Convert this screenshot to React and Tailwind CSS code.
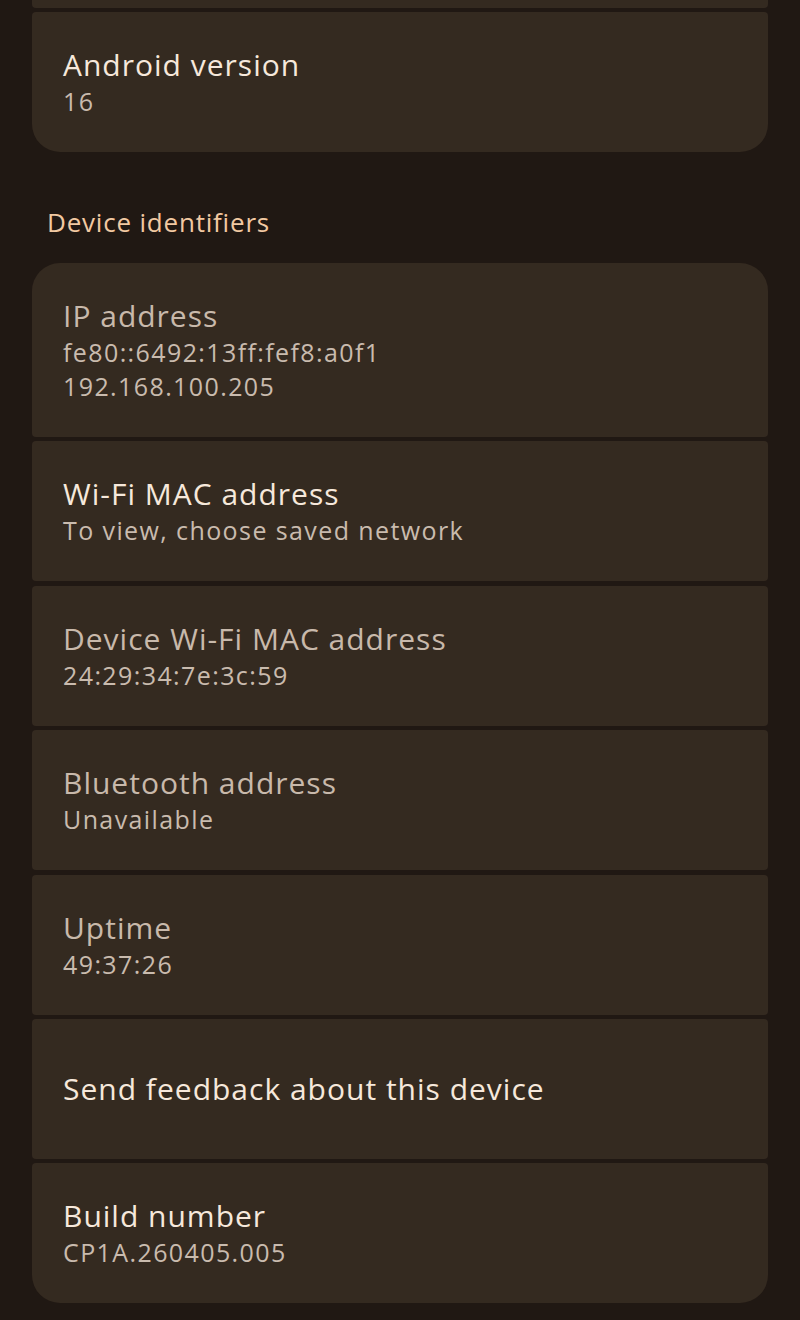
const items = [
  { title: 'IP address', lines: ['fe80::6492:13ff:fef8:a0f1', '192.168.100.205'], dim: true },
  { title: 'Wi-Fi MAC address', lines: ['To view, choose saved network'] },
  { title: 'Device Wi-Fi MAC address', lines: ['24:29:34:7e:3c:59'], dim: true },
  { title: 'Bluetooth address', lines: ['Unavailable'], dim: true },
  { title: 'Uptime', lines: ['49:37:26'], dim: true },
  { title: 'Send feedback about this device', lines: [] },
  { title: 'Build number', lines: ['CP1A.260405.005'] },
];

const Row = ({ title, lines, dim, className }) => (
  <div className={`flex min-h-[140px] flex-col justify-center bg-[#342a20] px-[31px] py-[34px] ${className}`}>
    <div className={`text-[30px] leading-[38px] tracking-[1px] ${dim ? 'text-[#c8b9ab]' : 'text-[#f6e8db]'}`}>{title}</div>
    {lines.map((line) => (
      <div key={line} className="text-[25px] leading-[34px] tracking-[1.4px] text-[#c9bbae]">
        {line}
      </div>
    ))}
  </div>
);

export default function App() {
  return (
    <div className="min-h-[1320px] bg-[#201813] px-[32px] font-['Open_Sans',sans-serif]">
      <div className="flex flex-col gap-[4px]">
        <div className="h-[8px] rounded-b-[4px] bg-[#342a20]" />
        <Row title="Android version" lines={['16']} className="rounded-t-[4px] rounded-b-[28px]" />
      </div>

      {/* Device identifiers */}
      <div className="pl-[15px] pt-[56px] pb-[27px] text-[26px] leading-[28px] tracking-[0.8px] text-[#f2c9a2]">
        Device identifiers
      </div>

      <div className="flex flex-col gap-[4.4px] pb-[17px]">
        {items.map((item, i) => (
          <Row
            key={item.title}
            {...item}
            className={
              i === 0
                ? 'rounded-t-[28px] rounded-b-[4px]'
                : i === items.length - 1
                ? 'rounded-t-[4px] rounded-b-[28px]'
                : 'rounded-[4px]'
            }
          />
        ))}
      </div>
    </div>
  );
}
